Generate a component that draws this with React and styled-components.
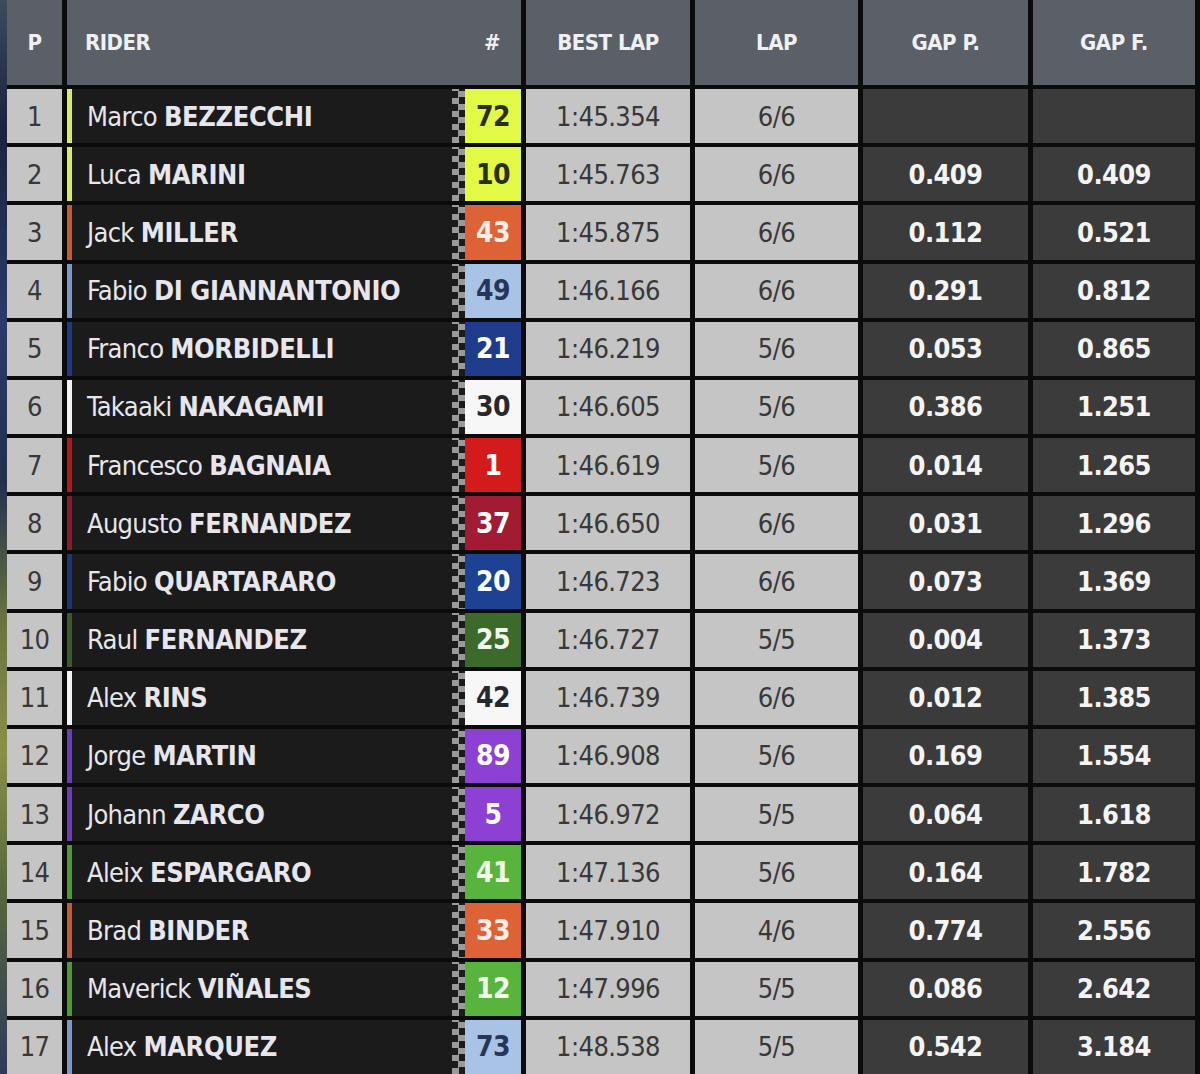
import React from "react";
import styled, { createGlobalStyle } from "styled-components";

const GlobalStyle = createGlobalStyle`
  html, body {
    margin: 0;
    padding: 0;
    background: #0b0b0c;
  }
  body {
    font-family: "DejaVu Sans Condensed", "Liberation Sans Narrow", "Liberation Sans", sans-serif;
  }
`;

const COLS = "55px 454px 164px 163px 165px 162px";

const Page = styled.div`
  width: 1200px;
  height: 1074px;
  overflow: hidden;
  display: flex;
  background: #0b0b0c;
`;

const Edge = styled.div`
  width: 7px;
  flex-shrink: 0;
  background: linear-gradient(
    180deg,
    #3d4a5c 0%,
    #1a2340 12%,
    #2a3a6a 30%,
    #223050 45%,
    #6b7440 58%,
    #8a8f48 70%,
    #5a6a3c 82%,
    #2c3a5a 100%
  );
`;

const Table = styled.div`
  display: flex;
  flex-direction: column;
  gap: 4px;
  width: 1188px;
`;

const Row = styled.div`
  display: grid;
  grid-template-columns: ${COLS};
  column-gap: 5px;
  height: ${(p) => (p.$head ? "85px" : "54.2px")};
`;

const HeadCell = styled.div`
  background: #5b5f67;
  color: #eef0f2;
  font-size: 22px;
  font-weight: 600;
  letter-spacing: -0.5px;
  display: flex;
  align-items: center;
  justify-content: ${(p) => (p.$left ? "space-between" : "center")};
  padding: ${(p) => (p.$left ? "0 21px 0 18px" : "0")};
`;

const Cell = styled.div`
  display: flex;
  align-items: center;
  justify-content: center;
  font-size: 27px;
  letter-spacing: -0.6px;
  background: ${(p) => (p.$dark ? "#3b3b3b" : "#c5c5c5")};
  color: ${(p) => (p.$dark ? "#f4f4f4" : "#383838")};
  font-weight: ${(p) => (p.$dark ? 600 : 400)};
`;

const RiderCell = styled.div`
  display: flex;
  align-items: stretch;
  background: #1b1b1b;
`;

const Stripe = styled.div`
  width: 5px;
  background: ${(p) => p.$color};
`;

const Name = styled.div`
  flex: 1;
  display: flex;
  align-items: center;
  padding-left: 15px;
  color: #e6e6ec;
  font-size: 27px;
  letter-spacing: -0.7px;
  white-space: nowrap;

  b {
    font-weight: 700;
    margin-left: 7px;
    letter-spacing: -0.4px;
  }
`;

const Checker = styled.div`
  width: 13px;
  background-color: #1b1b1b;
  background-image: conic-gradient(
    #9a9a9a 0 25%,
    #1b1b1b 0 50%,
    #9a9a9a 0 75%,
    #1b1b1b 0
  );
  background-size: 13px 13px;
  background-position: 0 2px;
`;

const Badge = styled.div`
  width: 56px;
  display: flex;
  align-items: center;
  justify-content: center;
  background: ${(p) => p.$bg};
  color: ${(p) => p.$fg};
  font-size: 28px;
  font-weight: 700;
  letter-spacing: -0.5px;
`;

const riders = [
  { p: 1, first: "Marco", last: "BEZZECCHI", num: 72, stripe: "#d6ef62", bg: "#e2fa45", fg: "#2b2f17", best: "1:45.354", lap: "6/6", gp: "", gf: "" },
  { p: 2, first: "Luca", last: "MARINI", num: 10, stripe: "#d6ef62", bg: "#e2fa45", fg: "#2b2f17", best: "1:45.763", lap: "6/6", gp: "0.409", gf: "0.409" },
  { p: 3, first: "Jack", last: "MILLER", num: 43, stripe: "#c45a32", bg: "#dd6236", fg: "#fbeee6", best: "1:45.875", lap: "6/6", gp: "0.112", gf: "0.521" },
  { p: 4, first: "Fabio", last: "DI GIANNANTONIO", num: 49, stripe: "#7a98c8", bg: "#a9c3e6", fg: "#26365a", best: "1:46.166", lap: "6/6", gp: "0.291", gf: "0.812" },
  { p: 5, first: "Franco", last: "MORBIDELLI", num: 21, stripe: "#1d3a86", bg: "#1e3b8c", fg: "#ffffff", best: "1:46.219", lap: "5/6", gp: "0.053", gf: "0.865" },
  { p: 6, first: "Takaaki", last: "NAKAGAMI", num: 30, stripe: "#f4f4f4", bg: "#f7f7f7", fg: "#26282c", best: "1:46.605", lap: "5/6", gp: "0.386", gf: "1.251" },
  { p: 7, first: "Francesco", last: "BAGNAIA", num: 1, stripe: "#b5181a", bg: "#d41b1b", fg: "#ffffff", best: "1:46.619", lap: "5/6", gp: "0.014", gf: "1.265" },
  { p: 8, first: "Augusto", last: "FERNANDEZ", num: 37, stripe: "#8b1a2c", bg: "#a31a33", fg: "#ffffff", best: "1:46.650", lap: "6/6", gp: "0.031", gf: "1.296" },
  { p: 9, first: "Fabio", last: "QUARTARARO", num: 20, stripe: "#1c3578", bg: "#1d4294", fg: "#ffffff", best: "1:46.723", lap: "6/6", gp: "0.073", gf: "1.369" },
  { p: 10, first: "Raul", last: "FERNANDEZ", num: 25, stripe: "#3a5a2c", bg: "#3b6a2a", fg: "#f2f6ee", best: "1:46.727", lap: "5/5", gp: "0.004", gf: "1.373" },
  { p: 11, first: "Alex", last: "RINS", num: 42, stripe: "#f4f4f4", bg: "#f7f7f7", fg: "#26282c", best: "1:46.739", lap: "6/6", gp: "0.012", gf: "1.385" },
  { p: 12, first: "Jorge", last: "MARTIN", num: 89, stripe: "#6e3cb8", bg: "#8c40d4", fg: "#ffffff", best: "1:46.908", lap: "5/6", gp: "0.169", gf: "1.554" },
  { p: 13, first: "Johann", last: "ZARCO", num: 5, stripe: "#6e3cb8", bg: "#8c40d4", fg: "#ffffff", best: "1:46.972", lap: "5/5", gp: "0.064", gf: "1.618" },
  { p: 14, first: "Aleix", last: "ESPARGARO", num: 41, stripe: "#4b9a32", bg: "#58b43d", fg: "#f2fbe9", best: "1:47.136", lap: "5/6", gp: "0.164", gf: "1.782" },
  { p: 15, first: "Brad", last: "BINDER", num: 33, stripe: "#c45a32", bg: "#dd6236", fg: "#fbeee6", best: "1:47.910", lap: "4/6", gp: "0.774", gf: "2.556" },
  { p: 16, first: "Maverick", last: "VIÑALES", num: 12, stripe: "#4b9a32", bg: "#58b43d", fg: "#f2fbe9", best: "1:47.996", lap: "5/5", gp: "0.086", gf: "2.642" },
  { p: 17, first: "Alex", last: "MARQUEZ", num: 73, stripe: "#7a98c8", bg: "#a9c3e6", fg: "#26365a", best: "1:48.538", lap: "5/5", gp: "0.542", gf: "3.184" },
];

export default function App() {
  return (
    <>
      <GlobalStyle />
      <Page>
        <Edge />
        <Table>
          <Row $head>
            <HeadCell>P</HeadCell>
            <HeadCell $left>
              <span>RIDER</span>
              <span>#</span>
            </HeadCell>
            <HeadCell>BEST LAP</HeadCell>
            <HeadCell>LAP</HeadCell>
            <HeadCell>GAP P.</HeadCell>
            <HeadCell>GAP F.</HeadCell>
          </Row>
          {riders.map((r) => (
            <Row key={r.p}>
              <Cell>{r.p}</Cell>
              <RiderCell>
                <Stripe $color={r.stripe} />
                <Name>
                  {r.first}
                  <b>{r.last}</b>
                </Name>
                <Checker />
                <Badge $bg={r.bg} $fg={r.fg}>
                  {r.num}
                </Badge>
              </RiderCell>
              <Cell>{r.best}</Cell>
              <Cell>{r.lap}</Cell>
              <Cell $dark>{r.gp}</Cell>
              <Cell $dark>{r.gf}</Cell>
            </Row>
          ))}
        </Table>
      </Page>
    </>
  );
}
